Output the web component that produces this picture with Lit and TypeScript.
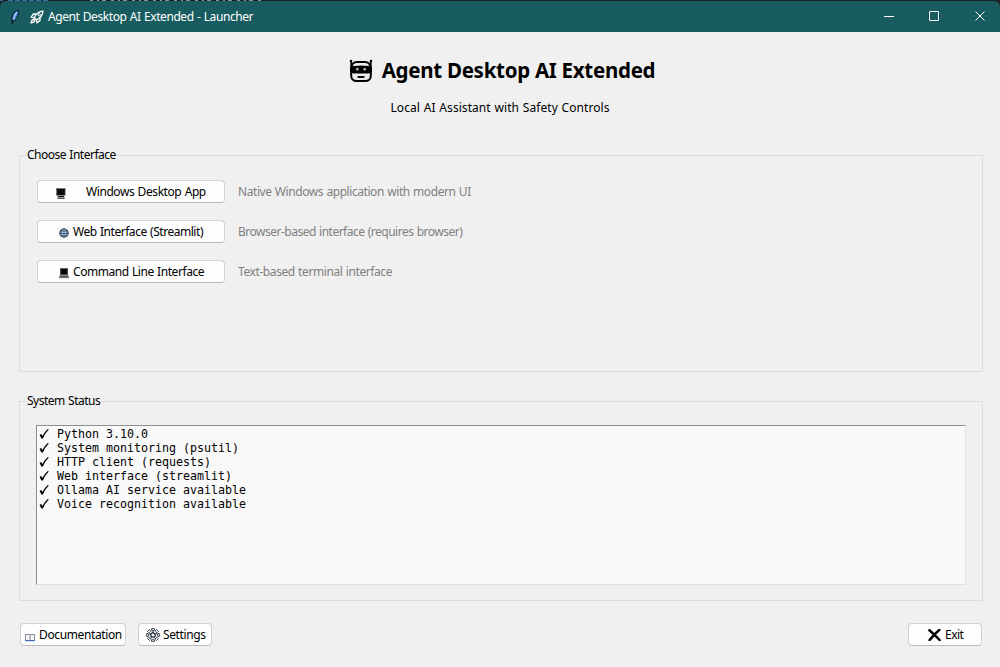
import { LitElement, html, svg, css } from "lit";
import { customElement } from "lit/decorators.js";

const monitor = html`<svg width="10" height="11" viewBox="0 0 10 11"><rect x="0" y="0" width="9.6" height="7.8" fill="#777b80"/><rect x="1" y="1" width="7.8" height="6" fill="#0a0c0e"/><path d="M2 8h6v1H2z" fill="#111"/><path d="M1 9h8v1H1z" fill="#999"/><path d="M1.5 10h7v.8h-7z" fill="#333"/></svg>`;
const globe = html`<svg width="10" height="10" viewBox="0 0 10 10"><circle cx="5" cy="5" r="4.2" fill="#b4d4f5" stroke="#222b38" stroke-width="1"/><path d="M1 3h8M.6 5.5h8.8M1.600 7.800h7" fill="none" stroke="#26364c" stroke-width=".8"/><path d="M5 .8v8.4M3 1.4q-1.3 3.6 0 7.2M7 1.4q1.3 3.6 0 7.2" fill="none" stroke="#3a5478" stroke-width=".6"/></svg>`;
const laptop = html`<svg width="10" height="11" viewBox="0 0 10 11"><rect x="1" y="0" width="8" height="7.4" fill="#60656b"/><rect x="1.8" y="1" width="6.4" height="5.4" fill="#050607"/><path d="M.2 7.4h9.6v2.8H.2z" fill="#707379"/><path d="M1 8.600h8" stroke="#444" stroke-width=".8"/></svg>`;
const book = html`<svg width="10" height="9" viewBox="0 0 10 9"><path d="M.5 1.500H4.200L5 2l.8-.5h3.700v6H.5z" fill="#f7f7f7" stroke="#747b86" stroke-width=".9"/><path d="M5 2v5.500" stroke="#747b86" stroke-width=".9"/><path d="M.2 7.700h9.600" stroke="#3467b0" stroke-width="1"/></svg>`;
const gear = html`<svg width="14" height="14" viewBox="0 0 14 14"><g fill="none" stroke="#20252b">${[0, 45, 90, 135, 180, 225, 270, 315].map(
  (a) => svg`<path d="M5.600 2V.7H8.400V2" transform=${`rotate(${a} 7 7)`} stroke-width=".9"/>`
)}<circle cx="7" cy="7" r="4.500" stroke="#31506b" stroke-width=".9"/><circle cx="7" cy="7" r="2.200" stroke-width="1.200"/><path d="M7 2.500v2.300M2.700 5.600l2.200.7M11.300 5.600l-2.200.7M4.400 10.600l1.300-1.800M9.600 10.600l-1.300-1.800" stroke-width=".9"/></g></svg>`;
const cross = html`<svg width="13" height="12" viewBox="0 0 13 12"><path d="M1.4 1.2Q6 5 11.6 11M11.4.8Q6.5 5 1.6 11" fill="none" stroke="#000" stroke-width="2.5" stroke-linecap="round"/></svg>`;
const robot = html`<svg width="24" height="24" viewBox="0 0 24 24"><path d="M2.2 9V2.400M21.800 9V2.400" stroke="#000" stroke-width="1.6"/><circle cx="2" cy="2" r="1.300"/><circle cx="22" cy="2" r="1.300"/><path d="M2.200 9Q3 3 8 3h8Q21 3 21.800 9v7.500q0 5.600-5.800 5.600H8q-5.800 0-5.800-5.600z" fill="#efefef" stroke="#000" stroke-width="2"/><path d="M1 8.200Q2.500 6.500 12 6.500T23 8.200v4.200q-1 2-4 2H5q-3 0-4-2z"/><rect x="7" y="9" width="2.600" height="2.600" rx="1" fill="#bbb"/><rect x="14.400" y="9" width="2.600" height="2.600" rx="1" fill="#bbb"/><path d="M8.500 18h7" stroke="#000" stroke-width="1.900"/></svg>`;
const feather = html`<svg width="10" height="16" viewBox="0 0 10 16"><path d="M2 12C1 8 3 3 8 1c1 4 0 8-4.500 11z" fill="#3d7fd0" stroke="#07131c" stroke-width="1"/><path d="M3.600 10.500Q4.500 6 6.900 3" fill="none" stroke="#cfe6ff" stroke-width="1.200"/><path d="M1.800 15l1-4" stroke="#07131c" stroke-width="1.200"/></svg>`;
const rocket = html`<svg width="14" height="14" viewBox="0 0 14 14"><path d="M4.200 7.500Q7 1.500 12.900 1.100 12.600 7 6.500 9.800z" fill="none" stroke="#fff" stroke-width="1.300"/><circle cx="9.200" cy="4.800" r="1.200" fill="none" stroke="#fff"/><path d="M6 4L3.400 4 1.200 7l3 .6M10 8v2.600l-3 2.200-.6-3M3.800 9.200Q1.500 9.500 1.100 12.900 4.500 12.500 4.800 10.200z" fill="none" stroke="#fff" stroke-width="1.300"/></svg>`;

@customElement("app-root")
export class AppRoot extends LitElement {
  static styles = css`
    :host { display: flex; flex-direction: column; width: 1000px; height: 667px; box-sizing: border-box; overflow: hidden; background: #f0f0f0; color: #000; font: 12px/16px "Noto Sans", sans-serif; word-spacing: .6px; white-space: nowrap; }
    svg { display: block; flex: none; }
    span { flex: none; }
    .strip { height: 1px; flex: none; background: #1d2224; }
    .bar { height: 31px; flex: none; display: flex; align-items: center; background: #185c5f; color: #fff; border-radius: 6px 6px 0 0; box-sizing: border-box; padding-left: 10px; }
    .top { background: #1d2224; flex: none; }
    .bar .rocket { margin: 0 4px 0 10px; }
    .title { flex: 1; letter-spacing: -.42px; }
    .heading { display: flex; justify-content: center; align-items: center; height: 30px; margin-top: 24px; gap: 9px; flex: none; padding-left: 4px; word-spacing: 0; }
    h1 { margin: -2px 0 0; font: bold 20.5px/28px "Noto Sans", sans-serif; letter-spacing: -.28px; }
    .sub { text-align: center; margin-top: 14px; height: 16px; flex: none; letter-spacing: .06px; }
    .panel { border: 1px solid #dcdcdc; box-sizing: border-box; flex: none; margin: 0 17px 0 19px; display: flex; flex-direction: column; }
    .choose { margin-top: 39px; height: 217px; }
    .status { margin-top: 29px; height: 200px; }
    .legend { background: #f0f0f0; align-self: flex-start; margin: -9px 0 0 6px; padding: 0 1px; height: 16px; letter-spacing: -.49px; }
    .row { display: flex; align-items: center; height: 23px; margin: 0 0 17px 17px; color: #808080; }
    .row.first { margin-top: 17px; }
    .label { padding-top: 1px; }
    .btn { display: flex; align-items: center; box-sizing: border-box; height: 23px; background: #fdfdfd; color: #000; border: 1px solid #d0d0d0; border-bottom-color: #bababa; border-radius: 4px; padding: 0; font: inherit; letter-spacing: -.38px; word-spacing: .6px; flex: none; }
    .wide { width: 188px; margin-right: 13px; }
    .log { margin: 16px 0 0 16px; width: 930px; height: 160px; box-sizing: border-box; background: #f9f9f9; border: 1px solid #e0e0e0; border-top-color: #8e8e8e; border-left-color: #8e8e8e; padding: 1px 0 0 2px; font: 11.63px/14px "DejaVu Sans Mono", monospace; word-spacing: 0; }
    .line { display: flex; height: 14px; }
    .tick { margin-right: 8px; }
    .foot { display: flex; margin: 22px 18px 0 20px; gap: 12px; }
    .docs { width: 106px; padding-left: 4px; gap: 4px; }
    .settings { width: 74px; padding-left: 7px; gap: 3px; }
    .exit { width: 74px; padding-left: 19px; gap: 4px; letter-spacing: -.5px; }
    .low { padding-top: 5px; }
    .grow { flex: 1; }
  `;

  private rows = [
    { icon: monitor, pad: 18, gap: 20, drop: 4, text: "Windows Desktop App", note: "Native Windows application with modern UI", ls: -0.42, nls: -0.43 },
    { icon: globe, pad: 21, gap: 4, drop: 3, text: "Web Interface (Streamlit)", note: "Browser-based interface (requires browser)", ls: -0.46, nls: -0.5 },
    { icon: laptop, pad: 21, gap: 4, drop: 3, text: "Command Line Interface", note: "Text-based terminal interface", ls: -0.44, nls: -0.41 },
  ];

  private lines = [
    "Python 3.10.0",
    "System monitoring (psutil)",
    "HTTP client (requests)",
    "Web interface (streamlit)",
    "Ollama AI service available",
    "Voice recognition available",
  ];

  render() {
    return html`
      <div class="strip"><svg width="280" height="1" viewBox="0 0 280 1"><path d="M0 .5h3M8 .5h40" stroke="#3a6ea0" stroke-dasharray="5 2"/><path d="M90 .5h172" stroke="#8b9092" stroke-dasharray="3 4 2 3 4 5"/></svg></div>
      <div class="top"><div class="bar">
        ${feather}<span class="rocket">${rocket}</span><span class="title">Agent Desktop AI Extended - Launcher</span>
        <svg width="140" height="31" viewBox="860 1 140 31" fill="none" stroke="#fff"><path d="M884 16.500h10"/><rect x="929.500" y="11.500" width="9" height="9" rx=".5"/><path d="M975.500 11.500l9 9m0-9l-9 9"/></svg>
      </div></div>
      <div class="heading">${robot}<h1>Agent Desktop AI Extended</h1></div>
      <div class="sub">Local AI Assistant with Safety Controls</div>
      <div class="panel choose">
        <div class="legend">Choose Interface</div>
        ${this.rows.map((r, i) => html`<div class="row ${i ? "" : "first"}">
          <button class="btn wide" style="padding-left:${r.pad}px;gap:${r.gap}px;letter-spacing:${r.ls}px"><span style="padding-top:${r.drop}px">${r.icon}</span><span class="label">${r.text}</span></button>
          <span class="label" style="letter-spacing:${r.nls}px">${r.note}</span>
        </div>`)}
      </div>
      <div class="panel status">
        <div class="legend">System Status</div>
        <div class="log">${this.lines.map((t) => html`<div class="line"><svg class="tick" width="10" height="14" viewBox="0 0 10 14"><path d="M.6 7.800l1.700-.9 1 2.200Q5.500 5 8.800 2.100l1 .3Q6 6 3.900 11.600H2.300z"/></svg><span>${t}</span></div>`)}</div>
      </div>
      <div class="foot">
        <button class="btn docs"><span class="low">${book}</span><span class="label">Documentation</span></button>
        <button class="btn settings">${gear}<span class="label">Settings</span></button>
        <div class="grow"></div>
        <button class="btn exit">${cross}<span class="label">Exit</span></button>
      </div>`;
  }
}
